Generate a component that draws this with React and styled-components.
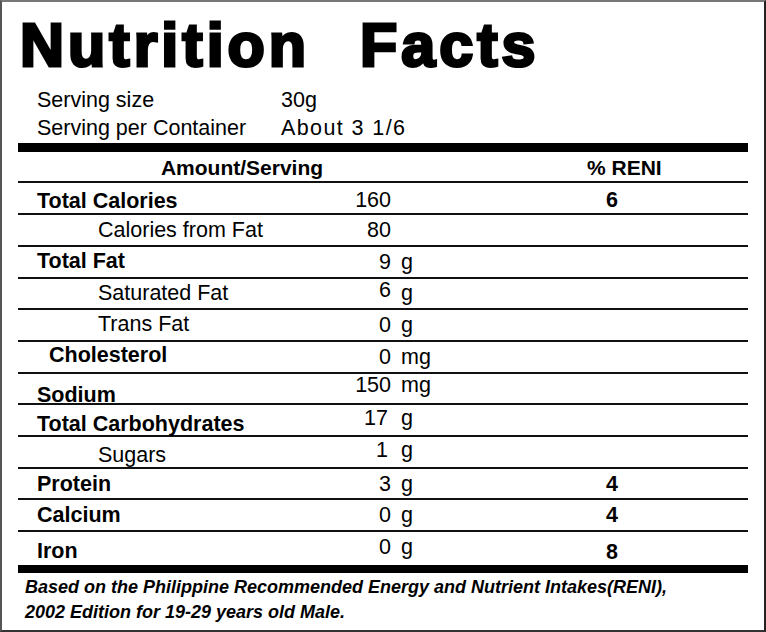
import React from "react";
import styled, { createGlobalStyle } from "styled-components";

const GlobalStyle = createGlobalStyle`
  html, body {
    margin: 0;
    padding: 0;
    background: #fff;
  }
  body {
    font-family: "Liberation Sans", Arial, sans-serif;
    color: #000;
  }
`;

const rows = [
  { label: "Total Calories", bold: true, value: "160", reni: "6", h: 32, ldy: 3, vdy: 2, rdy: 2 },
  { label: "Calories from Fat", indent: 80, value: "80", h: 32 },
  { label: "Total Fat", bold: true, value: "9", unit: "g", h: 32, ldy: -1 },
  { label: "Saturated Fat", indent: 80, value: "6", unit: "g", h: 31, vdy: -3 },
  { label: "Trans Fat", indent: 80, value: "0", unit: "g", h: 32, ldy: -1 },
  { label: "Cholesterol", bold: true, indent: 31, value: "0", unit: "mg", h: 32, ldy: -2 },
  { label: "Sodium", bold: true, value: "150", unit: "mg", h: 31, ldy: 7, vdy: -3, udy: -3 },
  { label: "Total Carbohydrates", bold: true, value: "17", unit: "g", h: 32, ldy: 4, vdy: -2, udy: -2, vpad: 3 },
  { label: "Sugars", indent: 80, value: "1", unit: "g", h: 32, ldy: 3, vdy: -2, udy: -2, vpad: 3 },
  { label: "Protein", bold: true, value: "3", unit: "g", reni: "4", h: 31, ldy: 1, vdy: 1, udy: 1, rdy: 1 },
  { label: "Calcium", bold: true, value: "0", unit: "g", reni: "4", h: 32 },
  { label: "Iron", bold: true, value: "0", unit: "g", reni: "8", h: 32, ldy: 3, vdy: -1, udy: -1, rdy: 4, last: true },
];

function NutritionLabel() {
  return (
    <Panel>
      <Title>
        <span>Nutrition</span>
        <span>Facts</span>
      </Title>
      <Serving>
        <span>Serving size</span>
        <span>30g</span>
        <span>Serving per Container</span>
        <ServingValue>About 3 1/6</ServingValue>
      </Serving>
      <Bar />
      <Header>
        <HeaderCell>Amount/Serving</HeaderCell>
        <HeaderCell $pad={121}>% RENI</HeaderCell>
      </Header>
      {rows.map((r) => (
        <Row key={r.label} $h={r.h} $last={r.last}>
          <Label $bold={r.bold} $indent={r.indent} $dy={r.ldy}>
            {r.label}
          </Label>
          <Value $dy={r.vdy} $pad={r.vpad}>{r.value}</Value>
          <Unit $dy={r.udy}>{r.unit}</Unit>
          <Reni $dy={r.rdy}>{r.reni}</Reni>
        </Row>
      ))}
      <Bar $h={8} />
      <Footnote>
        Based on the Philippine Recommended Energy and Nutrient Intakes(RENI),
        <br />
        2002 Edition for 19-29 years old Male.
      </Footnote>
    </Panel>
  );
}

const Panel = styled.div`
  width: 766px;
  height: 632px;
  box-sizing: border-box;
  border-style: solid;
  border-width: 2px;
  border-color: #777 #222 #333 #555;
  padding: 0 16px;
  background: #fff;
  overflow: hidden;
`;

const Title = styled.h1`
  margin: 13px 0 0;
  padding-left: 2px;
  display: flex;
  gap: 50px;
  font-family: "Liberation Sans", Arial, sans-serif;
  font-weight: 700;
  font-size: 61px;
  line-height: 61px;
  letter-spacing: 4px;
  -webkit-text-stroke: 3px #000;
`;

const Serving = styled.div`
  margin-top: 10px;
  padding-left: 19px;
  display: grid;
  grid-template-columns: 244px auto;
  font-size: 21.5px;
  line-height: 28px;
`;

const ServingValue = styled.span`
  letter-spacing: 1.4px;
`;

const Bar = styled.div`
  margin-top: 1px;
  height: ${(p) => p.$h || 9}px;
  background: #000;
`;

const Header = styled.div`
  display: grid;
  grid-template-columns: 448px 1fr;
  height: 31px;
  box-sizing: border-box;
  border-bottom: 2px solid #111;
  font-weight: 700;
  font-size: 21px;
  line-height: 29px;
`;

const HeaderCell = styled.div`
  margin-top: 1px;
  text-align: ${(p) => (p.$pad ? "left" : "center")};
  padding-left: ${(p) => p.$pad || 0}px;
`;

const Row = styled.div`
  display: grid;
  grid-template-columns: 323px 50px 171px 100px 1fr;
  height: ${(p) => p.$h}px;
  box-sizing: border-box;
  border-bottom: ${(p) => (p.$last ? "none" : "2px solid #111")};
  font-size: 21.5px;
  line-height: ${(p) => p.$h - (p.$last ? 0 : 2)}px;
  white-space: nowrap;
`;

const Cell = styled.div`
  margin-top: ${(p) => p.$dy || 0}px;
`;

const Label = styled(Cell)`
  padding-left: ${(p) => p.$indent || 19}px;
  font-weight: ${(p) => (p.$bold ? 700 : 400)};
`;

const Value = styled(Cell)`
  text-align: right;
  padding-right: ${(p) => p.$pad || 0}px;
`;

const Unit = styled(Cell)`
  padding-left: 10px;
`;

const Reni = styled(Cell)`
  text-align: center;
  font-weight: 700;
`;

const Footnote = styled.p`
  margin: 2px 0 0;
  padding-left: 7px;
  font-size: 18px;
  line-height: 25px;
  font-weight: 700;
  font-style: italic;
`;

export default function App() {
  return (
    <>
      <GlobalStyle />
      <NutritionLabel />
    </>
  );
}
